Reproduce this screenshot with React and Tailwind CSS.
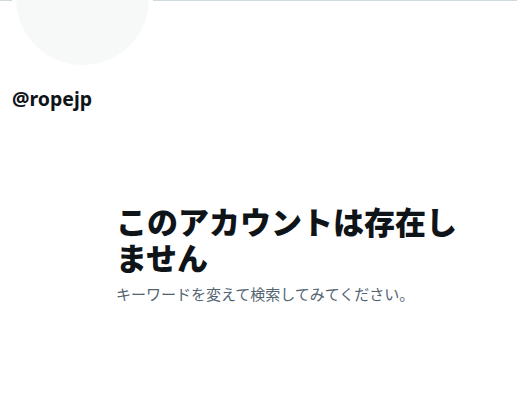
import React from "react";

export default function App() {
  return (
    <div className="w-[518px] h-[403px] overflow-hidden bg-white font-['Noto_Sans','Noto_Sans_CJK_JP',sans-serif]">
      {/* banner, only its last row is visible */}
      <div className="h-px w-[517px] bg-[#cfd9de]" />

      <div className="pl-3">
        <div className="-mt-[73px] w-[141px] h-[141px] rounded-full border-4 border-white bg-[#f7f9f9]" />
        <div className="mt-[18px] text-[19.5px] leading-6 font-bold text-[#0f1419]">
          @ropejp
        </div>
      </div>

      <div className="mt-[93px] pl-[116px] pr-[40px]">
        <h1 className="text-[31px] leading-9 font-extrabold text-[#0f1419] mb-2">
          このアカウントは存在しません
        </h1>
        <p className="text-[15px] leading-5 text-[#536471]">
          キーワードを変えて検索してみてください。
        </p>
      </div>
    </div>
  );
}
